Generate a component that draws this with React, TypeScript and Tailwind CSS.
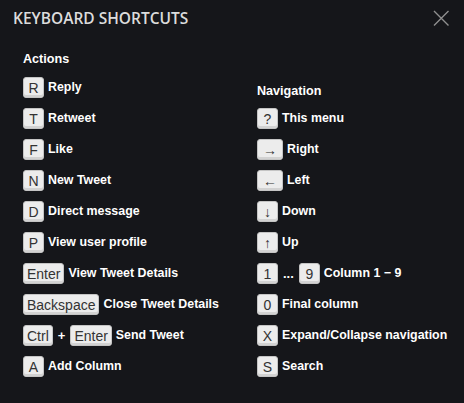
import React from 'react';

function Key({ children, wide }: { children: React.ReactNode; wide?: boolean }) {
  return (
    <span
      className={`inline-flex h-[21px] ${wide ? 'min-w-[26px]' : 'min-w-[21px]'} items-center justify-center rounded-[3px] border border-[#c4c4c4] bg-[#ececec] px-[3px] text-[14px] leading-none font-normal text-[#333] shadow-[inset_0_-2px_0_#d2d2d2]`}
    >
      {children}
    </span>
  );
}

function Row({ keys, label }: { keys: React.ReactNode; label: string }) {
  return (
    <div className="flex h-[21px] items-center gap-[4px] mb-[10px]">
      {keys}
      <span className="text-[12.4px] font-bold text-white">{label}</span>
    </div>
  );
}

export default function App() {
  const font = { fontFamily: '"Liberation Sans", Arial, sans-serif' };
  return (
    <div className="w-[464px] h-[403px] bg-[#15161a] overflow-hidden" style={font}>
      <header className="flex items-start justify-between pl-[13px] pr-[15px] pt-[8px]">
        <h1
          className="text-[15.5px] leading-[20px] font-semibold text-[#dcdcdc]"
          style={{ fontFamily: '"Open Sans", sans-serif' }}
        >
          KEYBOARD SHORTCUTS
        </h1>
        <button aria-label="Close" className="mt-[2px] text-[#8f8f8f]">
          <svg width="16" height="16" viewBox="0 0 16 16" fill="none" stroke="currentColor" strokeWidth="1.4">
            <path d="M1 1L15.5 15.5M15.5 1L1 15.5" />
          </svg>
        </button>
      </header>

      <div className="grid grid-cols-[234px_1fr] pl-[23px] mt-[24px]">
        <div>
          <h2 className="text-[12.6px] leading-[15px] font-bold text-white mb-[10px]">Actions</h2>
          <Row keys={<Key>R</Key>} label="Reply" />
          <Row keys={<Key>T</Key>} label="Retweet" />
          <Row keys={<Key>F</Key>} label="Like" />
          <Row keys={<Key>N</Key>} label="New Tweet" />
          <Row keys={<Key>D</Key>} label="Direct message" />
          <Row keys={<Key>P</Key>} label="View user profile" />
          <Row keys={<Key>Enter</Key>} label="View Tweet Details" />
          <Row keys={<Key>Backspace</Key>} label="Close Tweet Details" />
          <Row
            keys={
              <>
                <Key>Ctrl</Key>
                <span className="text-[13px] font-bold text-white px-[1px]">+</span>
                <Key>Enter</Key>
              </>
            }
            label="Send Tweet"
          />
          <Row keys={<Key>A</Key>} label="Add Column" />
        </div>
        <div className="pt-[32px]">
          <h2 className="text-[12.6px] leading-[15px] font-bold text-white mb-[9px]">Navigation</h2>
          <Row keys={<Key>?</Key>} label="This menu" />
          <Row keys={<Key wide>→</Key>} label="Right" />
          <Row keys={<Key wide>←</Key>} label="Left" />
          <Row keys={<Key>↓</Key>} label="Down" />
          <Row keys={<Key>↑</Key>} label="Up" />
          <Row
            keys={
              <>
                <Key>1</Key>
                <span className="text-[13px] font-bold text-white px-[1px]">...</span>
                <Key>9</Key>
              </>
            }
            label="Column 1 − 9"
          />
          <Row keys={<Key>0</Key>} label="Final column" />
          <Row keys={<Key>X</Key>} label="Expand/Collapse navigation" />
          <Row keys={<Key>S</Key>} label="Search" />
        </div>
      </div>
    </div>
  );
}
